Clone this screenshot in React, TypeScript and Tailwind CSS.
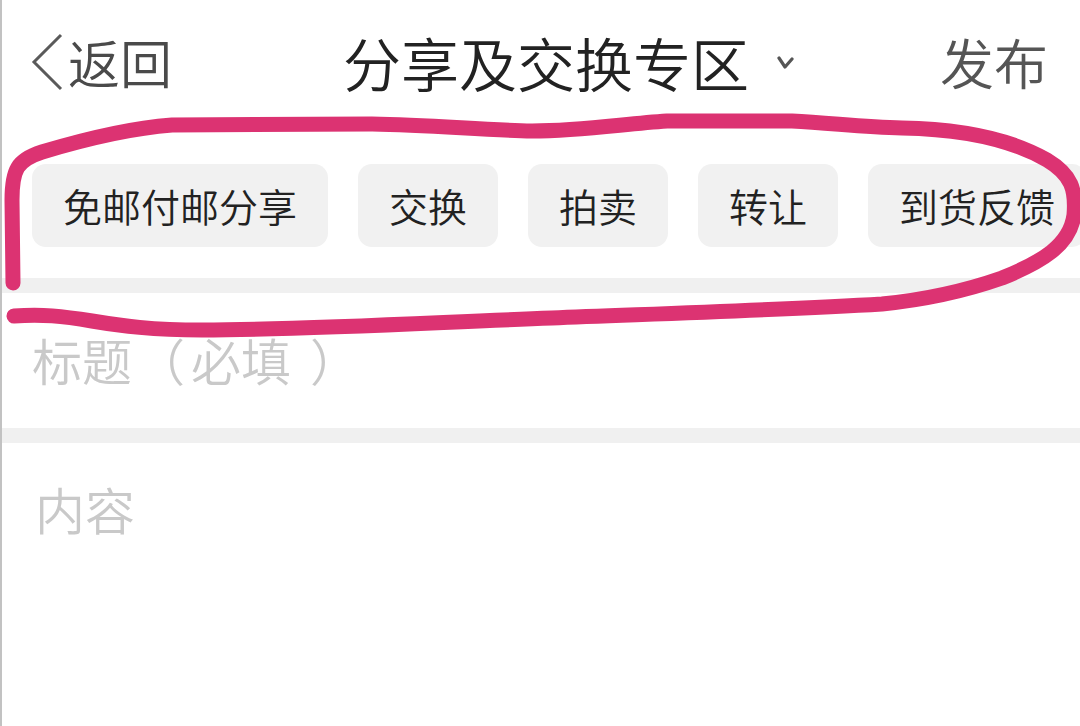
import React from "react";

const chips = ["免邮付邮分享", "交换", "拍卖", "转让", "到货反馈"];

export default function App() {
  return (
    <div className="relative w-[1080px] h-[726px] overflow-hidden bg-white border-l-2 border-[#c2c2c2] font-['Noto_Sans_CJK_SC','Noto_Sans',sans-serif] font-[350]">
      {/* Header */}
      <div className="flex items-center h-[124px]">
        <div className="flex items-center w-[341px] pl-[28px] shrink-0">
          <svg width="34" height="60" viewBox="0 0 34 60" className="shrink-0">
            <polyline points="31,3 4,30 31,57" fill="none" stroke="#5a5a5a" strokeWidth="3" strokeLinejoin="miter" />
          </svg>
          <span className="ml-[4px] text-[52px] leading-none text-[#4a4a4a] whitespace-nowrap">返回</span>
        </div>
        <div className="flex items-center">
          <span className="text-[58px] leading-none text-[#222222] whitespace-nowrap">分享及交换专区</span>
          <svg width="18" height="16" viewBox="0 0 18 16" className="ml-[28px] mt-[2px]">
            <polyline points="2,3 8,12 15,4" fill="none" stroke="#555555" strokeWidth="3.2" strokeLinecap="round" strokeLinejoin="round" />
          </svg>
        </div>
        <span className="ml-auto pr-[32px] text-[54px] leading-none text-[#555555] whitespace-nowrap">发布</span>
      </div>

      {/* Chips */}
      <div className="flex gap-[30px] pl-[30px] pt-[40px] pb-[31px] overflow-hidden">
        {chips.map((c) => (
          <div
            key={c}
            className="shrink-0 h-[83px] px-[31px] flex items-center rounded-[14px] bg-[#f1f1f1] text-[39px] leading-none text-[#222222] whitespace-nowrap"
          >
            {c}
          </div>
        ))}
      </div>

      <div className="h-[15px] bg-[#f0f0f0]" />

      {/* Title field */}
      <div className="h-[135px] flex items-center pl-[30px] pb-[4px]">
        <span className="flex items-center text-[50px] leading-none text-[#c9c9c9] whitespace-nowrap">
          <span>标题</span>
          <span className="ml-[3px]">（</span>
          <span className="ml-[6px]">必填</span>
          <span className="ml-[19px]">）</span>
        </span>
      </div>

      <div className="h-[15px] bg-[#f0f0f0]" />

      {/* Content field */}
      <div className="pl-[33px] pt-[40px]">
        <span className="text-[50px] leading-none text-[#c9c9c9]">内容</span>
      </div>

      {/* Hand-drawn annotation */}
      <svg className="absolute left-0 top-0 pointer-events-none" width="1080" height="726" viewBox="0 0 1080 726">
        <path
          d="M 11 283 L 10 200 C 10 170 15 160 40 152 C 80 140 130 128 170 125 L 370 124 C 430 125 480 130 530 131 C 580 131 620 124 665 121 L 790 121 C 830 123 860 127 900 128 C 960 129 1010 140 1045 160 C 1070 175 1074 190 1072 215 C 1068 245 1040 262 1000 278 C 960 292 920 300 880 304 C 780 310 650 314 550 318 C 420 323 300 330 200 330 C 150 330 120 326 90 321 C 60 316 40 314 12 316"
          fill="none"
          stroke="#dc3372"
          strokeWidth="15"
          strokeLinecap="round"
          strokeLinejoin="round"
        />
      </svg>
    </div>
  );
}
